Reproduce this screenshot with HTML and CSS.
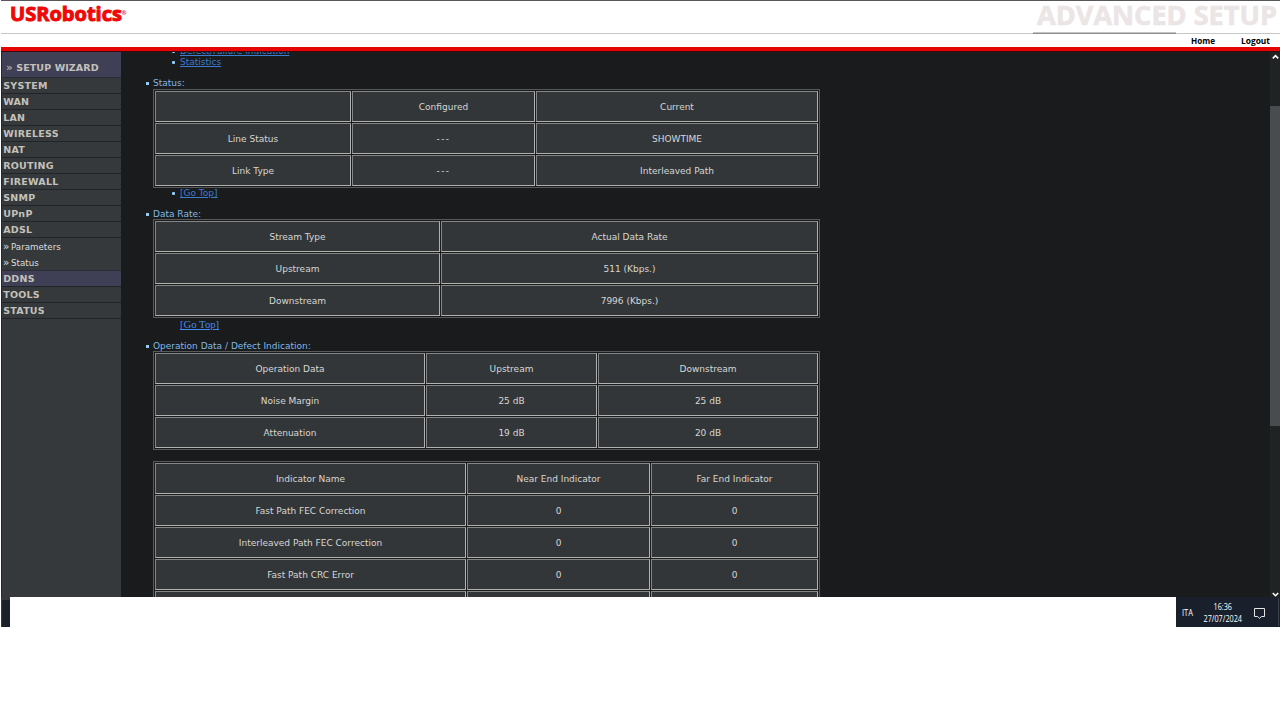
FILE: index.html
```html
<!DOCTYPE html>
<html lang="en">
<head>
<meta charset="utf-8">
<title>USRobotics - Advanced Setup</title>
<link rel="stylesheet" href="styles.css">
</head>
<body>
<header class="top">
  <div class="brand">
    <svg class="logo" width="130" height="32" viewBox="0 0 130 32" role="img"><text class="logo-text" x="9" y="19.500" textLength="112" lengthAdjust="spacingAndGlyphs">USRobotics</text><text class="logo-mark" x="120.500" y="14">®</text></svg>
    <svg class="banner" width="248" height="32" viewBox="0 0 248 32" role="img"><text class="banner-text" x="5" y="23.500" textLength="240" lengthAdjust="spacingAndGlyphs">ADVANCED SETUP</text></svg>
  </div>
  <div class="rule"><span class="rule-dark"></span></div>
  <nav class="links">
    <svg width="90" height="14" viewBox="0 0 90 14"><text class="link-text" x="1" y="10" textLength="24" lengthAdjust="spacingAndGlyphs">Home</text><text class="link-text" x="51" y="10" textLength="29" lengthAdjust="spacingAndGlyphs">Logout</text></svg>
  </nav>
</header>
<div class="frame">
  <aside class="side">
    <div class="wizard"><span class="chev">»</span> SETUP WIZARD</div>
    <div class="item">SYSTEM</div>
    <div class="item">WAN</div>
    <div class="item">LAN</div>
    <div class="item">WIRELESS</div>
    <div class="item">NAT</div>
    <div class="item">ROUTING</div>
    <div class="item">FIREWALL</div>
    <div class="item">SNMP</div>
    <div class="item">UPnP</div>
    <div class="item">ADSL</div>
    <div class="subs"><div class="sub"><span class="sub-chev">»</span>Parameters</div><div class="sub"><span class="sub-chev">»</span>Status</div></div>
    <div class="item active">DDNS</div>
    <div class="item">TOOLS</div>
    <div class="item">STATUS</div>
  </aside>
  <main class="main">
    <div class="line nested dot"><a class="link">Defect/Failure Indication</a></div>
    <div class="line nested dot"><a class="link">Statistics</a></div>
    <div class="line label dot">Status:</div>
    <div class="grid g-status">
      <div></div><div>Configured</div><div>Current</div>
      <div>Line Status</div><div class="dashes">---</div><div>SHOWTIME</div>
      <div>Link Type</div><div class="dashes">---</div><div>Interleaved Path</div>
    </div>
    <div class="line nested dot"><a class="link">[Go Top]</a></div>
    <div class="line label dot">Data Rate:</div>
    <div class="grid g-rate">
      <div>Stream Type</div><div>Actual Data Rate</div>
      <div>Upstream</div><div>511 (Kbps.)</div>
      <div>Downstream</div><div>7996 (Kbps.)</div>
    </div>
    <div class="line nested serif"><a class="link">[Go Top]</a></div>
    <div class="line label dot">Operation Data / Defect Indication:</div>
    <div class="grid g-oper">
      <div>Operation Data</div><div>Upstream</div><div>Downstream</div>
      <div>Noise Margin</div><div>25 dB</div><div>25 dB</div>
      <div>Attenuation</div><div>19 dB</div><div>20 dB</div>
    </div>
    <div class="grid g-ind">
      <div>Indicator Name</div><div>Near End Indicator</div><div>Far End Indicator</div>
      <div>Fast Path FEC Correction</div><div>0</div><div>0</div>
      <div>Interleaved Path FEC Correction</div><div>0</div><div>0</div>
      <div>Fast Path CRC Error</div><div>0</div><div>0</div>
      <div></div><div></div><div></div>
    </div>
  </main>
  <div class="scroll">
    <svg class="arrow" width="10" height="10" viewBox="0 0 10 10"><path d="M2.800 6.400L5.500 3.700L8.200 6.400"/></svg>
    <div class="thumb"></div>
    <svg class="arrow" width="10" height="7" viewBox="0 0 10 7"><path d="M2.800 3L5.500 5.700L8.200 3"/></svg>
  </div>
</div>
<footer class="bottom">
  <div class="corner"></div>
  <div class="tray">
    <svg width="104" height="30" viewBox="0 0 104 30">
      <text class="tray-text" x="6" y="19" textLength="11" lengthAdjust="spacingAndGlyphs">ITA</text>
      <text class="tray-text" x="37.500" y="13" textLength="18.500" lengthAdjust="spacingAndGlyphs">16:36</text>
      <text class="tray-text" x="27.500" y="25" textLength="38.500" lengthAdjust="spacingAndGlyphs">27/07/2024</text>
      <path class="note" d="M78.500 11.500h10v8h-3.200l-1.800 2l-1.800-2h-3.200z"/>
      <path class="edge" d="M102.500 1v28"/>
    </svg>
  </div>
</footer>
</body>
</html>
```
FILE: styles.css
```css
* { box-sizing: border-box; }
body { margin: 0; width: 1280px; height: 720px; overflow: hidden; background: #fff; font-family: "DejaVu Sans", sans-serif; font-size: 9px; }
svg { display: block; overflow: visible; }
.top { height: 51px; margin-left: 1px; border-top: 1px solid #58585a; border-bottom: 4px solid #e60505; display: flex; flex-direction: column; }
.brand { height: 31px; display: flex; justify-content: space-between; }
.logo-text { font: 700 20px "Open Sans", sans-serif; fill: #f00808; stroke: #f00808; stroke-width: 1; }
.logo-mark { font: 700 6px "Open Sans", sans-serif; fill: #f00808; }
.banner-text { font: 700 27.500px "Open Sans", sans-serif; fill: #ebe5e5; stroke: #ebe5e5; stroke-width: .6; }
.rule { height: 2px; border-bottom: 1px solid #c6c6c6; display: flex; justify-content: flex-end; padding-right: 104px; }
.rule-dark { width: 143px; height: 2px; flex: none; background: linear-gradient(#c4c4c4 50%, #8e8e8e 50%); }
.links { flex: 1; display: flex; justify-content: flex-end; }
.link-text { font: 700 9.500px "Open Sans", sans-serif; fill: #000; }
.frame { height: 546px; margin-left: 1px; display: flex; overflow: hidden; background: #1a1b1d; border-top: 1px solid #39090b; }
.side { width: 120px; flex: none; background: #35393b; border-left: 1px solid #23282a; color: #c4c1bb; font-weight: 700; font-size: 9.500px; letter-spacing: .25px; }
.wizard { height: 26px; padding: 7px 0 0 4px; line-height: 17px; letter-spacing: .1px; background: #3f4055; border-bottom: 1px solid #2b2d35; white-space: nowrap; }
.chev { font-size: 11px; font-weight: 400; }
.item { height: 16px; padding-left: 1.200px; line-height: 16px; border-bottom: 1px solid #222527; }
.active { background: #3f4055; }
.subs { height: 33px; padding-top: 1px; border-bottom: 1px solid #2b2d35; }
.sub { display: flex; height: 16px; padding-left: 1px; font-size: 8.700px; font-weight: 400; line-height: 16px; letter-spacing: 0; color: #dedede; }
.sub-chev { width: 8px; font-size: 10.500px; line-height: 15px; }
.main { width: 1149px; flex: none; margin-top: -7px; padding-left: 32px; color: #d6d6d4; }
.line { position: relative; height: 11px; line-height: 13px; white-space: nowrap; }
.label { margin-top: 10px; color: #84b8e4; }
.nested { padding-left: 27px; }
.link { color: #3b7bd0; text-decoration: underline; }
.dot::before { content: ""; position: absolute; left: -7.500px; top: 5px; width: 3px; height: 3px; background: #8dcdf8; }
.nested.dot::before { left: 19px; border-radius: 1px; }
.serif { height: 12px; font: 10.700px/13px "Liberation Serif", serif; }
.serif .link { color: #438df0; }
.grid { width: 667px; display: grid; grid-auto-rows: 31px; gap: 1px; padding: 1px; border: 1px solid #57595a; }
.grid > div { display: flex; align-items: center; justify-content: center; background: #333638; border: 1px solid; border-color: #858686 #b1b1b0 #b1b1b0 #858686; }
.grid > .dashes { letter-spacing: 1.400px; }
.g-status { grid-template-columns: 196px 183px 282px; margin: 1px 0 -1px; }
.g-rate { grid-template-columns: 285px 377px; }
.g-oper { grid-template-columns: 270px 171px 220px; }
.g-ind { grid-template-columns: 311px 183px 167px; margin-top: 11px; }
.scroll { flex: 1; display: flex; flex-direction: column; background: #202324; }
.arrow path { fill: none; stroke: #fff; stroke-width: 1.600; }
.thumb { height: 321px; margin-top: 44px; margin-bottom: 164px; background: #484c4e; }
.bottom { height: 30px; margin-left: 1px; display: flex; justify-content: space-between; }
.corner { width: 9px; background: linear-gradient(#35393b 10%, #1a212b 10%); border-left: 1px solid #343a44; }
.tray { width: 104px; height: 30px; background: #19202c; }
.tray-text { font: 8.500px "Open Sans", sans-serif; fill: #fff; }
.note { fill: none; stroke: #e4e4e4; stroke-width: 1; }
.edge { stroke: #3c424d; stroke-width: 1; }
```
